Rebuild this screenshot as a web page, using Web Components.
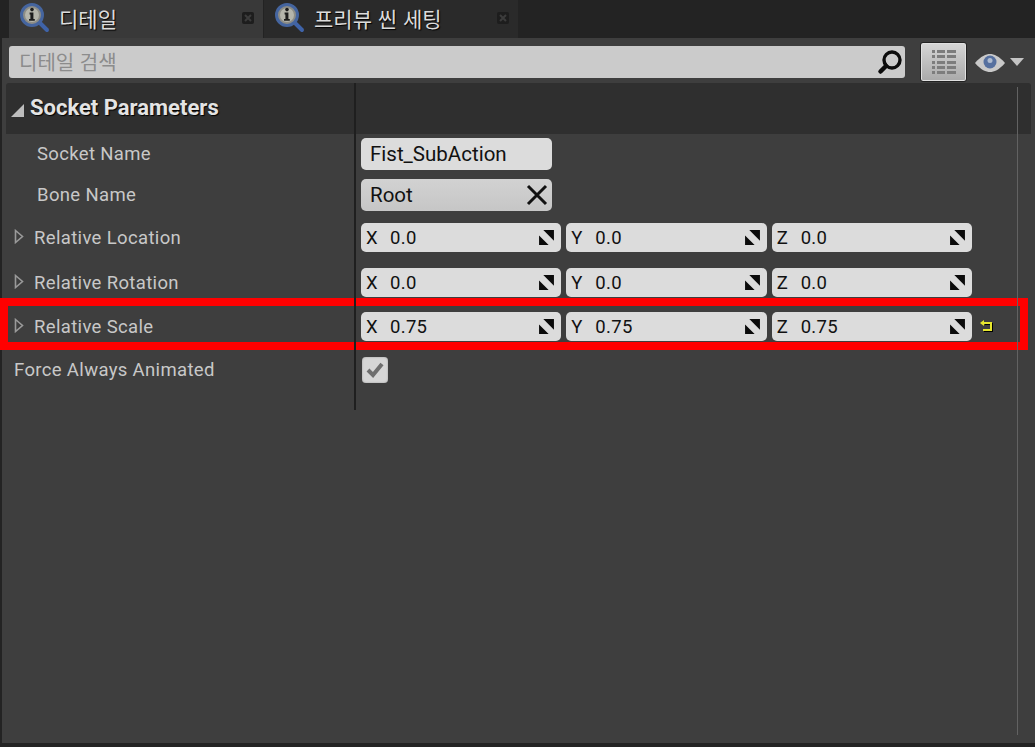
<!DOCTYPE html>
<html lang="ko">
<head>
<meta charset="utf-8">
<title>디테일</title>
<style>
  html, body { margin: 0; padding: 0; background: #232323; overflow: hidden; }
  body { font-family: Roboto, "Noto Sans CJK KR", sans-serif; }
</style>
</head>
<body>
<ue-details-window>
  <ue-tab slot="tabs" active>디테일</ue-tab>
  <ue-tab slot="tabs">프리뷰 씬 세팅</ue-tab>
  <ue-search slot="toolbar" placeholder="디테일 검색"></ue-search>
  <ue-section title="Socket Parameters">
    <ue-row label="Socket Name" h="40"><ue-text-field value="Fist_SubAction"></ue-text-field></ue-row>
    <ue-row label="Bone Name" h="42"><ue-text-field value="Root" clear></ue-text-field></ue-row>
    <ue-row label="Relative Location" h="43" expand><ue-vector x="0.0" y="0.0" z="0.0"></ue-vector></ue-row>
    <ue-row label="Relative Rotation" h="47" expand><ue-vector x="0.0" y="0.0" z="0.0"></ue-vector></ue-row>
    <ue-row label="Relative Scale" h="41" expand highlight><ue-vector x="0.75" y="0.75" z="0.75" reset></ue-vector></ue-row>
    <ue-row label="Force Always Animated" h="46" flush><ue-check></ue-check></ue-row>
  </ue-section>
</ue-details-window>

<script>
const LENS = `
  <svg width="34" height="32" viewBox="0 0 34 32">
    <path d="M20 20l8 8" stroke="#3f63a8" stroke-width="4" stroke-linecap="round"/>
    <circle cx="13" cy="13" r="10.5" fill="#8d8d86" stroke="#45659f" stroke-width="3"/>
    <circle cx="13" cy="13" r="7" fill="#b5b5ab"/>
    <circle cx="13" cy="7.6" r="1.8" fill="#1d1d1d"/>
    <path d="M10.6 10.6h3.8v6.4h1.4v1.8h-5.8V17h1.4v-4.6h-.8z" fill="#1d1d1d"/>
  </svg>`;

class UeDetailsWindow extends HTMLElement {
  constructor() {
    super();
    this.attachShadow({ mode: 'open' });
    this.shadowRoot.innerHTML = `
      <style>
        :host { display: flex; flex-direction: column; width: 1035px; height: 747px; background: #232323; overflow: hidden; }
        .tabs { display: flex; height: 38px; padding-left: 9px; flex: none; }
        .panel { flex: none; height: 705px; margin-left: 2px; background: #3e3e3e; display: flex; flex-direction: column; position: relative; }
        .toolbar { height: 45px; flex: none; }
        .content { flex: 1; padding-left: 4px; padding-right: 4px; }
        .scroll { position: absolute; left: 1015px; top: 49px; width: 1px; height: 648px; background: #626262; }
      </style>
      <div class="tabs"><slot name="tabs"></slot></div>
      <div class="panel">
        <div class="toolbar"><slot name="toolbar"></slot></div>
        <div class="content"><slot></slot></div>
        <div class="scroll"></div>
      </div>`;
  }
}

class UeTab extends HTMLElement {
  constructor() {
    super();
    this.attachShadow({ mode: 'open' });
    this.shadowRoot.innerHTML = `
      <style>
        :host { display: flex; align-items: center; width: 254px; margin-right: 1px; height: 38px; background: #2a2a2a; box-sizing: border-box; padding-left: 10px; }
        :host([active]) { background: #393939; }
        .icon { width: 34px; height: 32px; margin-top: -3px; flex: none; }
        .label { margin-left: 6px; font: 21px "Noto Sans CJK KR", sans-serif; color: #dcdcdc; text-shadow: 1px 1px 1px #000; flex: 1; white-space: nowrap; margin-top: -3px; }
        .close { width: 14px; height: 14px; margin-right: 8px; margin-top: -3px; flex: none; }
      </style>
      <div class="icon">${LENS}</div>
      <div class="label"><slot></slot></div>
      <svg class="close" viewBox="0 0 14 14"><rect x="1" y="1" width="12" height="12" rx="2" fill="#1d1d1d"/><path d="M4 4l6 6M10 4l-6 6" stroke="#3c3c3c" stroke-width="2"/></svg>`;
  }
}

class UeSearch extends HTMLElement {
  constructor() {
    super();
    this.attachShadow({ mode: 'open' });
    this.shadowRoot.innerHTML = `
      <style>
        :host { display: flex; align-items: flex-start; padding: 4px 0 0 7px; height: 45px; box-sizing: border-box; }
        .box { width: 896px; height: 32px; margin-top: 4px; background: #cbcbcb; border-radius: 3px; display: flex; align-items: center; box-sizing: border-box; padding: 0 0 0 10px; }
        .ph { flex: 1; font: 20px "Noto Sans CJK KR", sans-serif; color: #8c8c8c; margin-top: -2px; }
        .glass { width: 30px; height: 30px; margin-right: 0; }
        .view { margin-left: 15px; width: 47px; height: 40px; box-sizing: border-box; border: 1px solid #222; border-radius: 3px; background: linear-gradient(#d6d6d6, #a9a9a9); box-shadow: inset 0 0 0 1px #e0e0e0; display: flex; align-items: center; justify-content: center; }
        .eye { margin-left: 8px; margin-top: 9px; width: 30px; height: 24px; }
        .arrow { margin-left: 5px; margin-top: 16px; width: 0; height: 0; border-left: 7px solid transparent; border-right: 7px solid transparent; border-top: 8px solid #c4c4c4; }
      </style>
      <div class="box">
        <div class="ph">${this.getAttribute('placeholder') || ''}</div>
        <svg class="glass" viewBox="0 0 30 30"><circle cx="17" cy="13" r="8" fill="none" stroke="#0c0c0c" stroke-width="3.4"/><path d="M11 19l-5.500 5.500" stroke="#0c0c0c" stroke-width="4.500" stroke-linecap="round"/></svg>
      </div>
      <div class="view">
        <svg width="24" height="26" viewBox="0 0 24 26" fill="#7d7d7d">
          <rect x="0" y="1" width="3" height="3"/><rect x="5" y="1" width="8" height="3"/><rect x="15" y="1" width="9" height="3"/>
          <rect x="0" y="6" width="3" height="3"/><rect x="5" y="6" width="8" height="3"/><rect x="15" y="6" width="9" height="3"/>
          <rect x="0" y="12" width="3" height="3"/><rect x="5" y="12" width="8" height="3"/><rect x="15" y="12" width="9" height="3"/>
          <rect x="0" y="17" width="3" height="3"/><rect x="5" y="17" width="8" height="3"/><rect x="15" y="17" width="9" height="3"/>
          <rect x="0" y="22" width="3" height="3"/><rect x="5" y="22" width="8" height="3"/><rect x="15" y="22" width="9" height="3"/>
        </svg>
      </div>
      <svg class="eye" viewBox="0 0 30 24">
        <path d="M0 12C6 5 11 3 15 3s9 2 15 9c-6 7-11 9-15 9S6 19 0 12z" fill="#c9c9c9"/>
        <circle cx="15" cy="11" r="6.500" fill="#56709f"/>
        <circle cx="15" cy="9.500" r="2.500" fill="#aebbd0"/>
      </svg>
      <div class="arrow"></div>`;
  }
}

class UeSection extends HTMLElement {
  constructor() {
    super();
    this.attachShadow({ mode: 'open' });
    this.shadowRoot.innerHTML = `
      <style>
        :host { display: block; }
        .head { display: grid; grid-template-columns: 348px 1fr; height: 51px; background: #2f2f2f; border-radius: 3px 3px 0 0; width: 1025px; }
        .title { display: flex; align-items: center; padding-left: 5px; }
        .tri { width: 13px; height: 13px; flex: none; margin-top: 3px; }
        .text { margin-left: 6px; font: 700 22px Roboto, sans-serif; color: #e4e4e4; text-shadow: 1px 1px 1px #000; white-space: nowrap; margin-top: -2px; }
        .divider { border-left: 2px solid #1f1f1f; }
        .rows { padding-bottom: 17px; position: relative; }
        .rows::after { content: ""; position: absolute; left: 348px; top: 0; bottom: 0; width: 2px; background: #1f1f1f; }
      </style>
      <div class="head">
        <div class="title">
          <svg class="tri" viewBox="0 0 13 13"><path d="M0 13L13 0v13z" fill="#bdbdbd"/></svg>
          <div class="text">${this.getAttribute('title') || ''}</div>
        </div>
        <div class="divider"></div>
      </div>
      <div class="rows"><slot></slot></div>`;
  }
}

class UeRow extends HTMLElement {
  constructor() {
    super();
    this.attachShadow({ mode: 'open' });
    const hasArrow = this.hasAttribute('expand');
    const flush = hasArrow || this.hasAttribute('flush');
    this.shadowRoot.innerHTML = `
      <style>
        :host { display: grid; grid-template-columns: 350px 1fr; align-items: center; height: ${this.getAttribute('h') || 42}px; position: relative; }
        .name { display: flex; align-items: center; padding-left: ${flush ? 8 : 31}px; font: 18.500px Roboto, sans-serif; letter-spacing: .35px; color: #c8c8c8; white-space: nowrap; }
        .arrow { width: 10px; height: 15px; margin-right: 10px; flex: none; margin-top: -2px; }
        .val { padding-left: 5px; }
        .mark { position: absolute; left: -6px; top: -8px; bottom: -3px; width: 1028px; border: 8px solid #f00; box-sizing: border-box; }
      </style>
      <div class="name">${hasArrow ? `<svg class="arrow" viewBox="0 0 10 15"><path d="M1.500 1.500L8.500 7.500L1.500 13.500z" fill="none" stroke="#9a9a9a" stroke-width="1.600"/></svg>` : ''}${this.getAttribute('label')}</div>
      <div class="val"><slot></slot></div>
      ${this.hasAttribute('highlight') ? '<div class="mark"></div>' : ''}`;
  }
}

class UeTextField extends HTMLElement {
  constructor() {
    super();
    this.attachShadow({ mode: 'open' });
    this.shadowRoot.innerHTML = `
      <style>
        :host { display: flex; align-items: center; width: 191px; height: 32px; box-sizing: border-box; padding: 0 3px 0 9px; border-radius: 5px; background: #dcdcdc; font: 20.500px Roboto, sans-serif; color: #111; }
        :host([clear]) { background: linear-gradient(#d2d2d2, #c6c6c6); }
        span { flex: 1; white-space: nowrap; }
      </style>
      <span>${this.getAttribute('value') || ''}</span>
      ${this.hasAttribute('clear') ? '<svg width="24" height="24" viewBox="0 0 24 24"><path d="M3 3l18 18M21 3L3 21" stroke="#111" stroke-width="3"/></svg>' : ''}`;
  }
}

class UeVector extends HTMLElement {
  constructor() {
    super();
    this.attachShadow({ mode: 'open' });
    const cell = (axis, value) => `
      <div class="cell">
        <span class="axis">${axis}</span><span class="num">${value}</span>
        <svg width="17" height="17" viewBox="0 0 16 16"><path d="M5 1h10v10zM1 6l9 9H1z" fill="#0b0b0b"/></svg>
      </div>`;
    this.shadowRoot.innerHTML = `
      <style>
        :host { display: flex; align-items: center; }
        .grid { display: grid; grid-template-columns: repeat(3, 1fr); gap: 5px; width: 611px; }
        .cell { display: flex; align-items: center; height: 29px; border-radius: 5px; background: #dcdcdc; padding: 0 6px 0 5px; font: 18.500px Roboto, sans-serif; color: #111; }
        .axis { width: 24px; flex: none; }
        .num { flex: 1; letter-spacing: .3px; }
        .reset { margin-left: 7px; width: 14px; height: 15px; }
      </style>
      <div class="grid">
        ${cell('X', this.getAttribute('x'))}
        ${cell('Y', this.getAttribute('y'))}
        ${cell('Z', this.getAttribute('z'))}
      </div>
      ${this.hasAttribute('reset') ? `<svg class="reset" viewBox="0 0 14 15"><path d="M5 4h7v7H4" fill="none" stroke="#000" stroke-width="2" transform="translate(1 1)"/><path d="M5 4h7v7H4" fill="none" stroke="#e6e62e" stroke-width="2"/><path d="M1 4l4-3v6z" fill="#e6e62e"/></svg>` : ''}`;
  }
}

class UeCheck extends HTMLElement {
  constructor() {
    super();
    this.attachShadow({ mode: 'open' });
    this.shadowRoot.innerHTML = `
      <style>
        :host { display: flex; align-items: center; justify-content: center; margin-left: 1px; width: 26px; height: 26px; border-radius: 4px; background: #d6d6d6; box-shadow: inset 0 0 2px #999; }
      </style>
      <svg width="20" height="18" viewBox="0 0 20 18"><path d="M3 9l5 5 9-11" fill="none" stroke="#6e6e6e" stroke-width="4"/></svg>`;
  }
}

customElements.define('ue-details-window', UeDetailsWindow);
customElements.define('ue-tab', UeTab);
customElements.define('ue-search', UeSearch);
customElements.define('ue-section', UeSection);
customElements.define('ue-row', UeRow);
customElements.define('ue-text-field', UeTextField);
customElements.define('ue-vector', UeVector);
customElements.define('ue-check', UeCheck);
</script>
</body>
</html>
